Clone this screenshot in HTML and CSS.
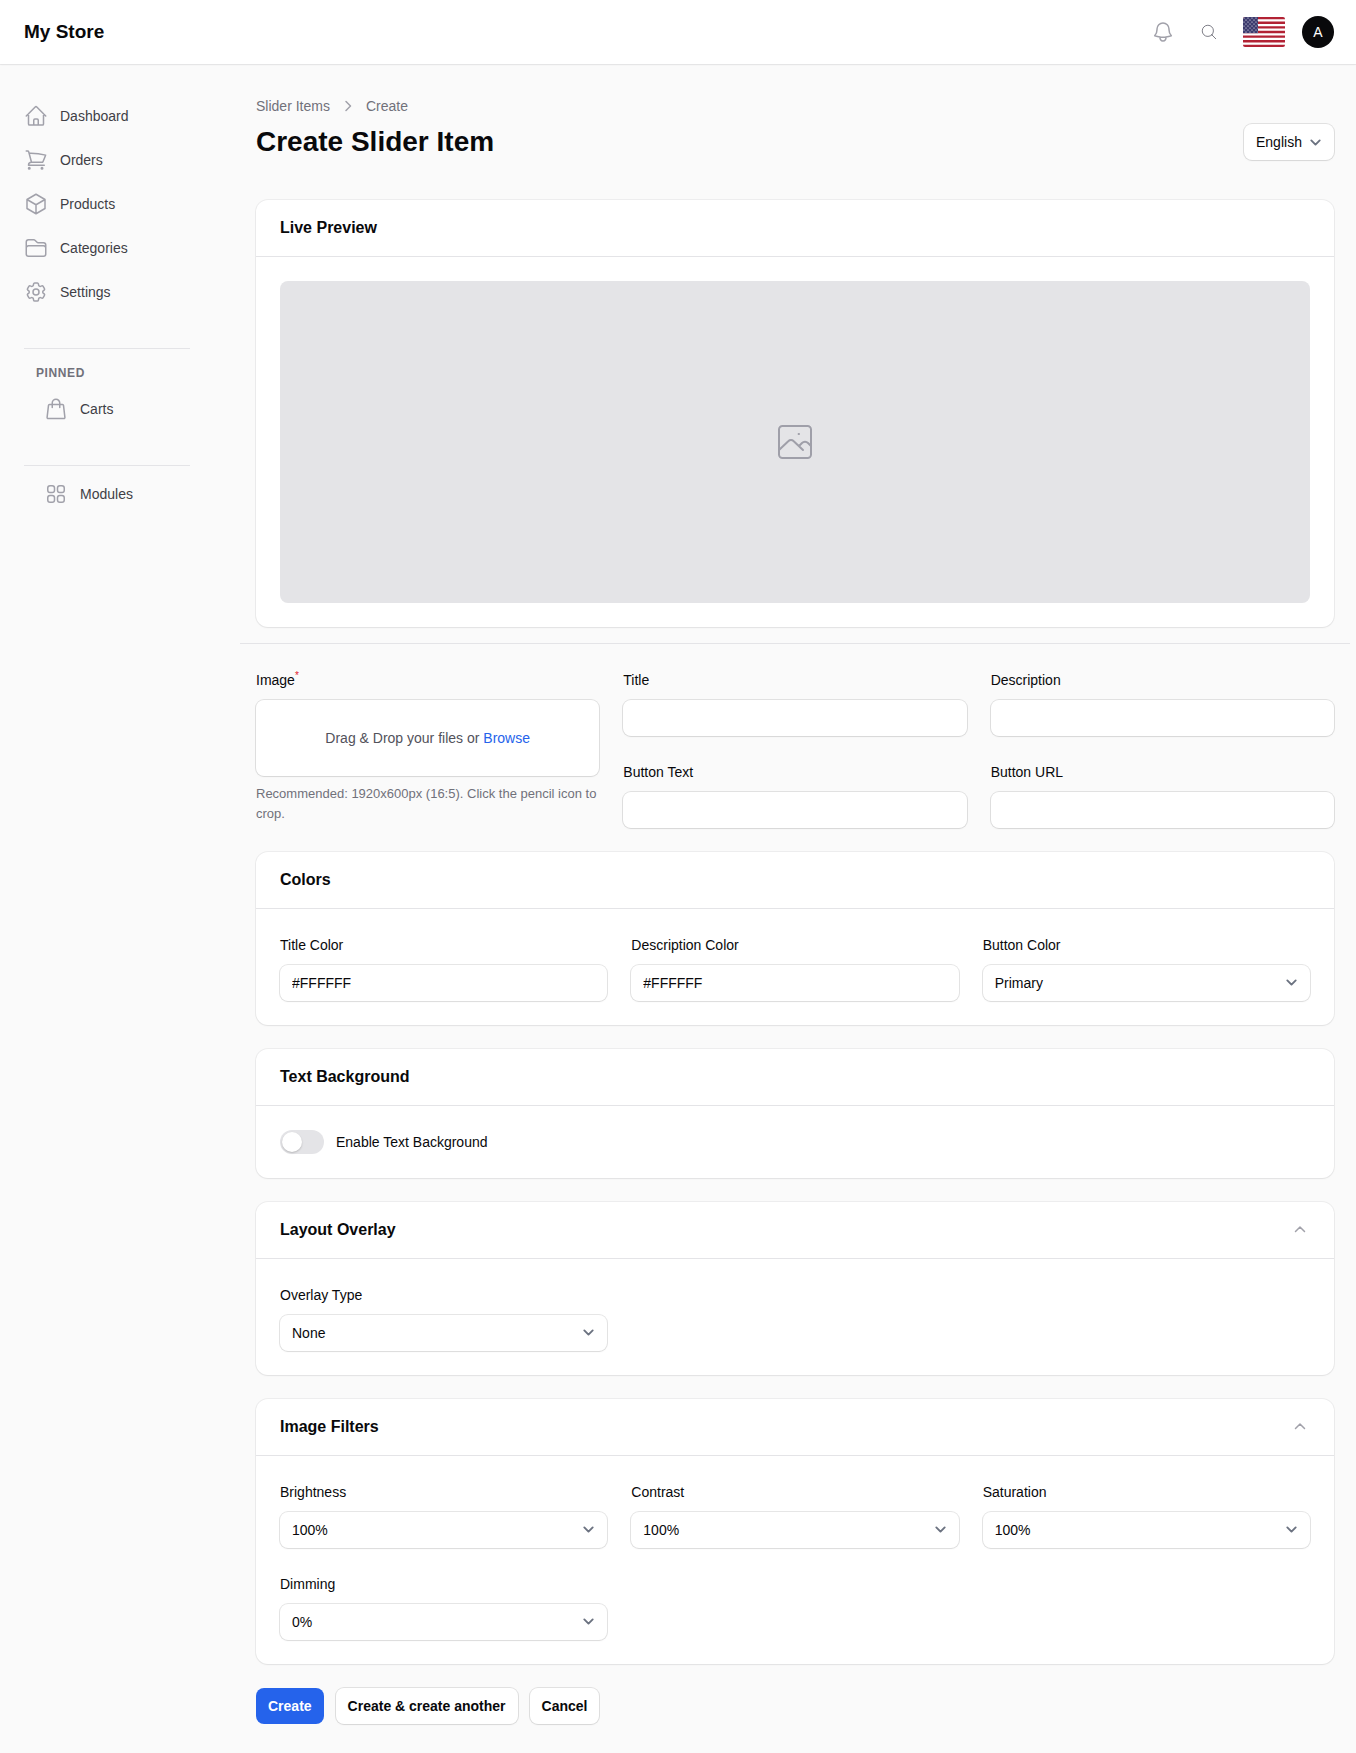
FILE: index.html
```html
<!DOCTYPE html>
<html lang="en">
<head>
<meta charset="utf-8">
<meta name="viewport" content="width=device-width, initial-scale=1">
<title>Create Slider Item - My Store</title>
<link rel="stylesheet" href="styles.css">
</head>
<body>
<header class="topbar">
  <a class="brand" href="#">My Store</a>
  <div class="topbar-tools">
    <button class="icon-btn" type="button" aria-label="Notifications">
      <svg class="icon" viewBox="0 0 24 24"><path d="M14.857 17.082a23.848 23.848 0 0 0 5.454-1.31A8.967 8.967 0 0 1 18 9.75V9A6 6 0 0 0 6 9v.75a8.967 8.967 0 0 1-2.312 6.022c1.733.64 3.56 1.085 5.455 1.31m5.714 0a24.255 24.255 0 0 1-5.714 0m5.714 0a3 3 0 1 1-5.714 0"/></svg>
    </button>
    <button class="icon-btn" type="button" aria-label="Search">
      <svg class="icon icon-search" viewBox="0 0 24 24"><path d="m21 21-5.197-5.197m0 0A7.5 7.5 0 1 0 5.196 5.196a7.5 7.5 0 0 0 10.607 10.607Z"/></svg>
    </button>
    <button class="icon-btn" type="button" aria-label="Region: United States">
      <svg class="flag" viewBox="0 0 42 30">
        <defs>
          <pattern id="stars" width="4" height="4" patternUnits="userSpaceOnUse"><circle cx="1" cy="1" r=".6" fill="#fff"/><circle cx="3" cy="3" r=".6" fill="#fff"/></pattern>
        </defs>
        <rect width="42" height="30" fill="#fff"/>
        <path d="M0 1.15h42M0 5.77h42M0 10.38h42M0 15h42M0 19.62h42M0 24.23h42M0 28.85h42" stroke="#b22234" stroke-width="2.31"/>
        <rect width="15" height="16.15" fill="#3c3b6e"/>
        <rect width="15" height="16.15" fill="url(#stars)" stroke="none"/>
      </svg>
    </button>
    <button class="avatar" type="button" aria-label="Account">A</button>
  </div>
</header>

<div class="layout">
  <nav class="sidebar" aria-label="Main">
    <ul class="nav-list">
      <li><a class="nav-item" href="#"><svg class="icon" viewBox="0 0 24 24"><path d="m2.25 12 8.954-8.955c.44-.439 1.152-.439 1.591 0L21.75 12M4.5 9.75v10.125c0 .621.504 1.125 1.125 1.125H9.75v-4.875c0-.621.504-1.125 1.125-1.125h2.25c.621 0 1.125.504 1.125 1.125V21h4.125c.621 0 1.125-.504 1.125-1.125V9.75M8.25 21h8.25"/></svg>Dashboard</a></li>
      <li><a class="nav-item" href="#"><svg class="icon" viewBox="0 0 24 24"><path d="M2.25 3h1.386c.51 0 .955.343 1.087.835l.383 1.437M7.5 14.25a3 3 0 0 0-3 3h15.75m-12.75-3h11.218c1.121-2.3 2.1-4.684 2.924-7.138a60.114 60.114 0 0 0-16.536-1.84M7.5 14.25 5.106 5.272M6 20.25a.75.75 0 1 1-1.5 0 .75.75 0 0 1 1.5 0Zm12.75 0a.75.75 0 1 1-1.5 0 .75.75 0 0 1 1.5 0Z"/></svg>Orders</a></li>
      <li><a class="nav-item" href="#"><svg class="icon" viewBox="0 0 24 24"><path d="m21 7.5-9-5.25L3 7.5m18 0-9 5.25m9-5.25v9l-9 5.25M3 7.5l9 5.25M3 7.5v9l9 5.25m0-9v9"/></svg>Products</a></li>
      <li><a class="nav-item" href="#"><svg class="icon" viewBox="0 0 24 24"><path d="M2.25 12.75V12A2.25 2.25 0 0 1 4.5 9.75h15A2.25 2.25 0 0 1 21.75 12v.75m-8.69-6.44-2.12-2.12a1.5 1.5 0 0 0-1.061-.44H4.5A2.25 2.25 0 0 0 2.25 6v12a2.25 2.25 0 0 0 2.25 2.25h15A2.25 2.25 0 0 0 21.75 18V9a2.25 2.25 0 0 0-2.25-2.25h-5.379a1.5 1.5 0 0 1-1.06-.44Z"/></svg>Categories</a></li>
      <li><a class="nav-item" href="#"><svg class="icon" viewBox="0 0 24 24"><path d="M9.594 3.94c.09-.542.56-.94 1.11-.94h2.593c.55 0 1.02.398 1.11.94l.213 1.281c.063.374.313.686.645.87.074.04.147.083.22.127.325.196.72.257 1.075.124l1.217-.456a1.125 1.125 0 0 1 1.37.49l1.296 2.247a1.125 1.125 0 0 1-.26 1.431l-1.003.827c-.293.241-.438.613-.43.992a7.723 7.723 0 0 1 0 .255c-.008.378.137.75.43.991l1.004.827c.424.35.534.955.26 1.43l-1.298 2.247a1.125 1.125 0 0 1-1.369.491l-1.217-.456c-.355-.133-.75-.072-1.076.124a6.47 6.47 0 0 1-.22.128c-.331.183-.581.495-.644.869l-.213 1.281c-.09.543-.56.94-1.11.94h-2.594c-.55 0-1.019-.398-1.11-.94l-.213-1.281c-.062-.374-.312-.686-.644-.87a6.52 6.52 0 0 1-.22-.127c-.325-.196-.72-.257-1.076-.124l-1.217.456a1.125 1.125 0 0 1-1.369-.49l-1.297-2.247a1.125 1.125 0 0 1 .26-1.431l1.004-.827c.292-.24.437-.613.43-.991a6.932 6.932 0 0 1 0-.255c.007-.38-.138-.751-.43-.992l-1.004-.827a1.125 1.125 0 0 1-.26-1.43l1.297-2.247a1.125 1.125 0 0 1 1.37-.491l1.216.456c.356.133.751.072 1.076-.124.072-.044.146-.086.22-.128.332-.183.582-.495.644-.869l.214-1.28Z"/><path d="M15 12a3 3 0 1 1-6 0 3 3 0 0 1 6 0Z"/></svg>Settings</a></li>
    </ul>
    <section class="nav-group">
      <h2 class="nav-heading">Pinned</h2>
      <a class="nav-item nav-item-sub" href="#"><svg class="icon" viewBox="0 0 24 24"><path d="M15.750 10.500V6a3.750 3.750 0 1 0-7.500 0v4.500M5.500 7.500h13a1 1 0 0 1 1 .9l1.400 12a1 1 0 0 1-1 1.100H4.100a1 1 0 0 1-1-1.100l1.400-12a1 1 0 0 1 1-.9Z"/></svg>Carts</a>
    </section>
    <section class="nav-group">
      <a class="nav-item nav-item-sub" href="#"><svg class="icon" viewBox="0 0 24 24"><path d="M3.750 6A2.250 2.250 0 0 1 6 3.750h2.250A2.250 2.250 0 0 1 10.500 6v2.250a2.250 2.250 0 0 1-2.250 2.250H6a2.250 2.250 0 0 1-2.250-2.250V6ZM3.750 15.750A2.250 2.250 0 0 1 6 13.500h2.250a2.250 2.250 0 0 1 2.250 2.250V18a2.250 2.250 0 0 1-2.250 2.250H6A2.250 2.250 0 0 1 3.750 18v-2.250ZM13.500 6a2.250 2.250 0 0 1 2.250-2.250H18A2.250 2.250 0 0 1 20.250 6v2.250A2.250 2.250 0 0 1 18 10.500h-2.250a2.250 2.250 0 0 1-2.250-2.250V6ZM13.500 15.750a2.250 2.250 0 0 1 2.250-2.250H18a2.250 2.250 0 0 1 2.250 2.250V18A2.250 2.250 0 0 1 18 20.250h-2.250A2.250 2.250 0 0 1 13.500 18v-2.250Z"/></svg>Modules</a>
    </section>
  </nav>

  <main class="main">
    <div class="page-header">
      <div>
        <nav class="breadcrumbs" aria-label="Breadcrumb">
          <a href="#">Slider Items</a>
          <svg class="crumb-sep" viewBox="0 0 20 20"><path d="m8 5.500 4.500 4.500L8 14.500"/></svg>
          <a href="#">Create</a>
        </nav>
        <h1 class="page-title">Create Slider Item</h1>
      </div>
      <select class="control select select-language" aria-label="Language"><option>English</option></select>
    </div>

    <form class="form">
      <div class="preview-wrap">
        <section class="card">
          <div class="card-header"><h2 class="card-title">Live Preview</h2></div>
          <div class="card-body">
            <div class="preview">
              <svg class="preview-icon" viewBox="0 0 40 40"><rect x="4" y="4" width="32" height="32" rx="3.500"/><path d="m4 28 9.500-9a3.500 3.500 0 0 1 5 0L28 28M24 24l3-3a4.200 4.200 0 0 1 6 0l3 3"/><path d="M23.500 11.500h1v1h-1Z" stroke-width="1"/></svg>
            </div>
          </div>
        </section>
      </div>

      <div class="fields-main">
        <div class="field field-upload">
          <label class="label" for="image">Image<sup class="required">*</sup></label>
          <div class="dropzone">
            <input class="file-input" id="image" type="file">
            <span>Drag &amp; Drop your files or <a class="link" href="#">Browse</a></span>
          </div>
          <p class="hint">Recommended: 1920x600px (16:5). Click the pencil icon to crop.</p>
        </div>
        <div class="field"><label class="label" for="title">Title</label><input class="control" id="title" type="text"></div>
        <div class="field"><label class="label" for="description">Description</label><input class="control" id="description" type="text"></div>
        <div class="field"><label class="label" for="button-text">Button Text</label><input class="control" id="button-text" type="text"></div>
        <div class="field"><label class="label" for="button-url">Button URL</label><input class="control" id="button-url" type="text"></div>
      </div>

      <section class="card">
        <div class="card-header"><h2 class="card-title">Colors</h2></div>
        <div class="card-body fields">
          <div class="field"><label class="label" for="title-color">Title Color</label><input class="control" id="title-color" type="text" value="#FFFFFF"></div>
          <div class="field"><label class="label" for="description-color">Description Color</label><input class="control" id="description-color" type="text" value="#FFFFFF"></div>
          <div class="field"><label class="label" for="button-color">Button Color</label><select class="control select" id="button-color"><option>Primary</option></select></div>
        </div>
      </section>

      <section class="card">
        <div class="card-header"><h2 class="card-title">Text Background</h2></div>
        <div class="card-body">
          <label class="toggle-row"><input class="toggle" type="checkbox" role="switch">Enable Text Background</label>
        </div>
      </section>

      <section class="card">
        <div class="card-header"><h2 class="card-title">Layout Overlay</h2><button class="collapse" type="button" aria-label="Collapse Layout Overlay"><svg viewBox="0 0 20 20"><path d="m5.500 11.500 4.500-4.500 4.500 4.500"/></svg></button></div>
        <div class="card-body fields">
          <div class="field"><label class="label" for="overlay-type">Overlay Type</label><select class="control select" id="overlay-type"><option>None</option></select></div>
        </div>
      </section>

      <section class="card">
        <div class="card-header"><h2 class="card-title">Image Filters</h2><button class="collapse" type="button" aria-label="Collapse Image Filters"><svg viewBox="0 0 20 20"><path d="m5.500 11.500 4.500-4.500 4.500 4.500"/></svg></button></div>
        <div class="card-body fields">
          <div class="field"><label class="label" for="brightness">Brightness</label><select class="control select" id="brightness"><option>100%</option></select></div>
          <div class="field"><label class="label" for="contrast">Contrast</label><select class="control select" id="contrast"><option>100%</option></select></div>
          <div class="field"><label class="label" for="saturation">Saturation</label><select class="control select" id="saturation"><option>100%</option></select></div>
          <div class="field"><label class="label" for="dimming">Dimming</label><select class="control select" id="dimming"><option>0%</option></select></div>
        </div>
      </section>

      <div class="actions">
        <button class="btn btn-primary" type="submit">Create</button>
        <button class="btn" type="button">Create &amp; create another</button>
        <button class="btn" type="button">Cancel</button>
      </div>
    </form>
  </main>
</div>
</body>
</html>
```

FILE: styles.css
```css
*, *::before, *::after { box-sizing: border-box; }

:root {
  --ink: #09090b;
  --text: #3f3f46;
  --muted: #71717a;
  --icon: #a1a1aa;
  --line: #e4e4e7;
  --ring: 0 0 0 1px rgba(9, 9, 11, 0.1), 0 1px 2px rgba(0, 0, 0, 0.05);
  --ring-soft: 0 0 0 1px rgba(9, 9, 11, 0.05), 0 1px 2px rgba(0, 0, 0, 0.05);
}

body {
  margin: 0;
  background: #fafafa;
  color: var(--ink);
  font: 14px/20px "Liberation Sans", Arial, sans-serif;
}

h1, h2, p, ul { margin: 0; padding: 0; }
ul { list-style: none; }
a { color: inherit; text-decoration: none; }
button, input, select { font: inherit; color: inherit; }
svg { display: block; fill: none; stroke: currentColor; stroke-linecap: round; stroke-linejoin: round; }

.icon { width: 24px; height: 24px; color: var(--icon); stroke-width: 1.5; flex: none; }
.icon-search { width: 18px; height: 18px; color: var(--muted); stroke-width: 1.2; }

.topbar {
  display: flex;
  align-items: center;
  justify-content: space-between;
  height: 64px;
  padding: 0 22px 0 24px;
  background: #fff;
  box-shadow: var(--ring-soft);
}
.brand { font-size: 19px; line-height: 28px; font-weight: 700; }
.topbar-tools { display: flex; align-items: center; gap: 25px; }
.icon-btn { padding: 0; border: 0; background: none; }
.flag { width: 42px; height: 30px; border-radius: 2px; stroke: none; }
.avatar {
  width: 32px;
  height: 32px;
  margin-left: -8px;
  padding: 0;
  border: 0;
  border-radius: 50%;
  background: var(--ink);
  color: #fff;
}

.layout { display: grid; grid-template-columns: 214px minmax(0, 1fr); }

.sidebar { padding: 32px 24px; }
.nav-list { display: grid; gap: 4px; }
.nav-item { display: flex; align-items: center; gap: 12px; height: 40px; color: var(--text); }
.nav-item-sub { padding-left: 20px; }
.nav-group { margin-top: 36px; padding-top: 8px; border-top: 1px solid var(--line); }
.nav-heading {
  margin-top: 6px;
  padding-left: 12px;
  font-size: 12px;
  font-weight: 700;
  letter-spacing: 0.05em;
  text-transform: uppercase;
  color: var(--muted);
}
.nav-heading + .nav-item { margin-top: 6px; }

.main { padding: 32px 22px 28px 42px; }
.page-header { display: flex; align-items: flex-end; justify-content: space-between; }
.breadcrumbs { display: flex; align-items: center; gap: 8px; color: var(--muted); }
.crumb-sep { width: 20px; height: 20px; color: var(--icon); stroke-width: 1.5; }
.page-title { margin-top: 8px; font-size: 28px; line-height: 36px; font-weight: 700; }

.form { display: grid; gap: 24px; margin-top: 40px; }
.preview-wrap { margin: 0 -16px; padding: 0 16px 16px; border-bottom: 1px solid var(--line); }

.card { border-radius: 12px; background: #fff; box-shadow: var(--ring-soft); }
.card-header { display: flex; align-items: center; justify-content: space-between; height: 56px; padding: 0 24px; }
.card-title { font-size: 16px; line-height: 24px; font-weight: 700; }
.card-body { padding: 24px; border-top: 1px solid var(--line); }
.collapse { padding: 0; border: 0; background: none; color: var(--icon); }
.collapse svg { width: 20px; height: 20px; stroke-width: 1.5; }

.preview { display: grid; place-items: center; aspect-ratio: 16 / 5; border-radius: 8px; background: var(--line); }
.preview-icon { width: 40px; height: 40px; color: #9f9fa9; stroke-width: 2; }

.fields, .fields-main { display: grid; grid-template-columns: repeat(3, minmax(0, 1fr)); gap: 24px; }
.field-upload { grid-row: span 2; }
.label { display: block; height: 24px; margin-bottom: 8px; line-height: 24px; }
.required { font-size: 10px; line-height: 0; color: #e11d2e; }

.control {
  display: block;
  width: 100%;
  height: 36px;
  padding: 0 12px;
  border: 0;
  border-radius: 8px;
  background-color: #fff;
  box-shadow: var(--ring);
}
.select {
  appearance: none;
  background-image: url("data:image/svg+xml,%3Csvg xmlns='http://www.w3.org/2000/svg' viewBox='0 0 20 20' fill='none' stroke='%236b7280' stroke-width='1.8' stroke-linecap='round' stroke-linejoin='round'%3E%3Cpath d='m6 8 4 4 4-4'/%3E%3C/svg%3E");
  background-repeat: no-repeat;
  background-position: right 8px center;
  background-size: 21px 21px;
}
.select-language { width: auto; padding-right: 32px; }

.dropzone {
  position: relative;
  display: grid;
  place-items: center;
  height: 76px;
  border-radius: 8px;
  background: #fff;
  box-shadow: var(--ring);
  color: #52525b;
}
.file-input { position: absolute; inset: 0; width: 100%; height: 100%; opacity: 0; }
.link { color: #2563eb; }
.hint { margin-top: 8px; font-size: 13px; color: var(--muted); }

.toggle-row { display: flex; align-items: center; gap: 12px; height: 24px; }
.toggle {
  appearance: none;
  width: 44px;
  height: 24px;
  margin: 0;
  padding: 2px;
  border-radius: 12px;
  background: var(--line);
}
.toggle::before {
  content: "";
  display: block;
  width: 20px;
  height: 20px;
  border-radius: 50%;
  background: #fff;
  box-shadow: 0 1px 2px rgba(0, 0, 0, 0.2);
}
.toggle:checked { background: #2563eb; }
.toggle:checked::before { margin-left: auto; }

.actions { display: flex; gap: 12px; }
.btn {
  height: 36px;
  padding: 0 12px;
  border: 0;
  border-radius: 8px;
  background: #fff;
  box-shadow: var(--ring);
  font-weight: 700;
}
.btn-primary { background: #2563eb; color: #fff; box-shadow: none; }
```
